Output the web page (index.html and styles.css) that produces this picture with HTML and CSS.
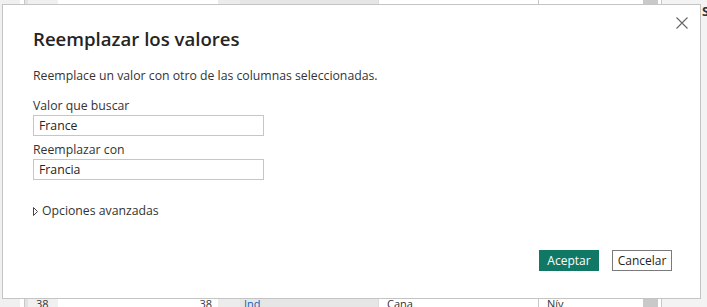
FILE: index.html
```html
<!DOCTYPE html>
<html lang="es">
<head>
  <meta charset="UTF-8" />
  <title>Reemplazar los valores</title>
  <link rel="stylesheet" href="styles.css">
</head>
<body>
  <!-- table behind the dialog -->
  <div class="table">
    <div class="col c1"></div>
    <div class="col c2"></div>
    <div class="col c3"><span class="cell-bottom">38</span></div>
    <div class="col c4"><span class="cell-bottom right">38</span></div>
    <div class="col c5"><span class="cell-bottom blue">Ind</span></div>
    <div class="col c6"><span class="cell-bottom">Cana</span></div>
    <div class="col c7"><span class="cell-bottom">Nív</span></div>
    <div class="col c8"></div>
    <div class="col c9"></div>
    <div class="col c10"><span class="head">S</span></div>
  </div>

  <div class="dialog">
    <button class="close-btn" aria-label="Cerrar">
      <svg width="12" height="12" viewBox="0 0 12 12">
        <path d="M0.5 0.5 L11.5 11.5 M11.5 0.5 L0.5 11.5" stroke="#666" stroke-width="1.1" fill="none" />
      </svg>
    </button>
    <h1>Reemplazar los valores</h1>
    <p class="desc">Reemplace un valor con otro de las columnas seleccionadas.</p>

    <div class="field">
      <label>Valor que buscar</label>
      <input type="text" value="France" />
    </div>
    <div class="field">
      <label>Reemplazar con</label>
      <input type="text" value="Francia" />
    </div>

    <div class="advanced">
      <svg width="5" height="9" viewBox="0 0 5 9">
        <path d="M0.5 0.5 L4.5 4.5 L0.5 8.5 Z" stroke="#444" stroke-width="1" fill="none" />
      </svg>
      <span>Opciones avanzadas</span>
    </div>

    <div class="actions">
      <button class="btn primary">Aceptar</button>
      <button class="btn">Cancelar</button>
    </div>
  </div>
</body>
</html>
```

FILE: styles.css
```css
body {
  margin: 0;
  font-family: 'Open Sans', 'Noto Sans', sans-serif;
  background: #fff;
  overflow: hidden;
  height: 307px;
  position: relative;
}
.table {
  display: flex;
  height: 307px;
}
.col {
  position: relative;
  height: 100%;
  box-sizing: border-box;
}
.c1 { width: 20px; background: #f0f0f0; }
.c2 { width: 5px; background: #fff; border-right: 1px solid #c8c8c8; }
.c3 { width: 33px; background: #f0f0f0; border-left: 3px solid #e2e2e2; }
.c4 { width: 160px; background: #fff; }
.c5 { width: 160px; background: #e6e6e6; border-left: 22px solid #ececec; }
.c6 { width: 160px; background: #fff; border-left: 1px solid #ddd; }
.c7 { width: 105px; background: #fff; border-left: 1px solid #c8c8c8; }
.c8 { width: 15px; background: #c9c9c9; }
.c9 { width: 4px; background: #fff; border-right: 1px solid #c8c8c8; }
.c10 { flex: 1; background: #f3f3f3; }
.cell-bottom {
  position: absolute;
  top: 298px;
  left: 8px;
  font-size: 11px;
  line-height: 12px;
  color: #333;
}
.cell-bottom.right { left: auto; right: 6px; }
.cell-bottom.blue { color: #1a5fb4; left: 4px; }
.head {
  position: absolute;
  top: 2px;
  left: 40px;
  font-size: 13px;
  font-weight: 700;
  color: #333;
}

.dialog {
  position: absolute;
  left: 2px;
  top: 4px;
  width: 699px;
  height: 295px;
  box-sizing: border-box;
  background: #fff;
  border: 1px solid #c4c4c4;
  padding: 21px 30px 0 30px;
  color: #333;
}
.close-btn {
  position: absolute;
  top: 8px;
  right: 8px;
  width: 20px;
  height: 20px;
  padding: 0;
  background: none;
  border: none;
  display: flex;
  align-items: center;
  justify-content: center;
}
.dialog h1 {
  margin: 0;
  font-size: 18.6px;
  font-weight: 600;
  line-height: 26px;
  color: #252423;
}
.desc {
  margin: 15px 0 0;
  font-size: 12.25px;
  line-height: 18px;
}
.field {
  display: flex;
  flex-direction: column;
  margin-top: 12px;
}
.field + .field { margin-top: 5px; }
.field label {
  font-size: 12.25px;
  line-height: 18px;
}
.field input {
  width: 231px;
  height: 21px;
  box-sizing: border-box;
  border: 1px solid #c6c6c6;
  padding: 0 5px;
  font-family: inherit;
  font-size: 12.25px;
  color: #252423;
  outline: none;
}
.advanced {
  display: flex;
  align-items: center;
  gap: 4px;
  margin-top: 22px;
  font-size: 12.25px;
  line-height: 18px;
}
.actions {
  position: absolute;
  right: 28px;
  bottom: 27px;
  display: flex;
  gap: 13px;
}
.btn {
  width: 60px;
  height: 21px;
  padding: 0;
  font-family: inherit;
  font-size: 12px;
  background: #fff;
  color: #252423;
  border: 1px solid #7a7a7a;
}
.btn.primary {
  background: #117865;
  border-color: #117865;
  color: #fff;
}
```
